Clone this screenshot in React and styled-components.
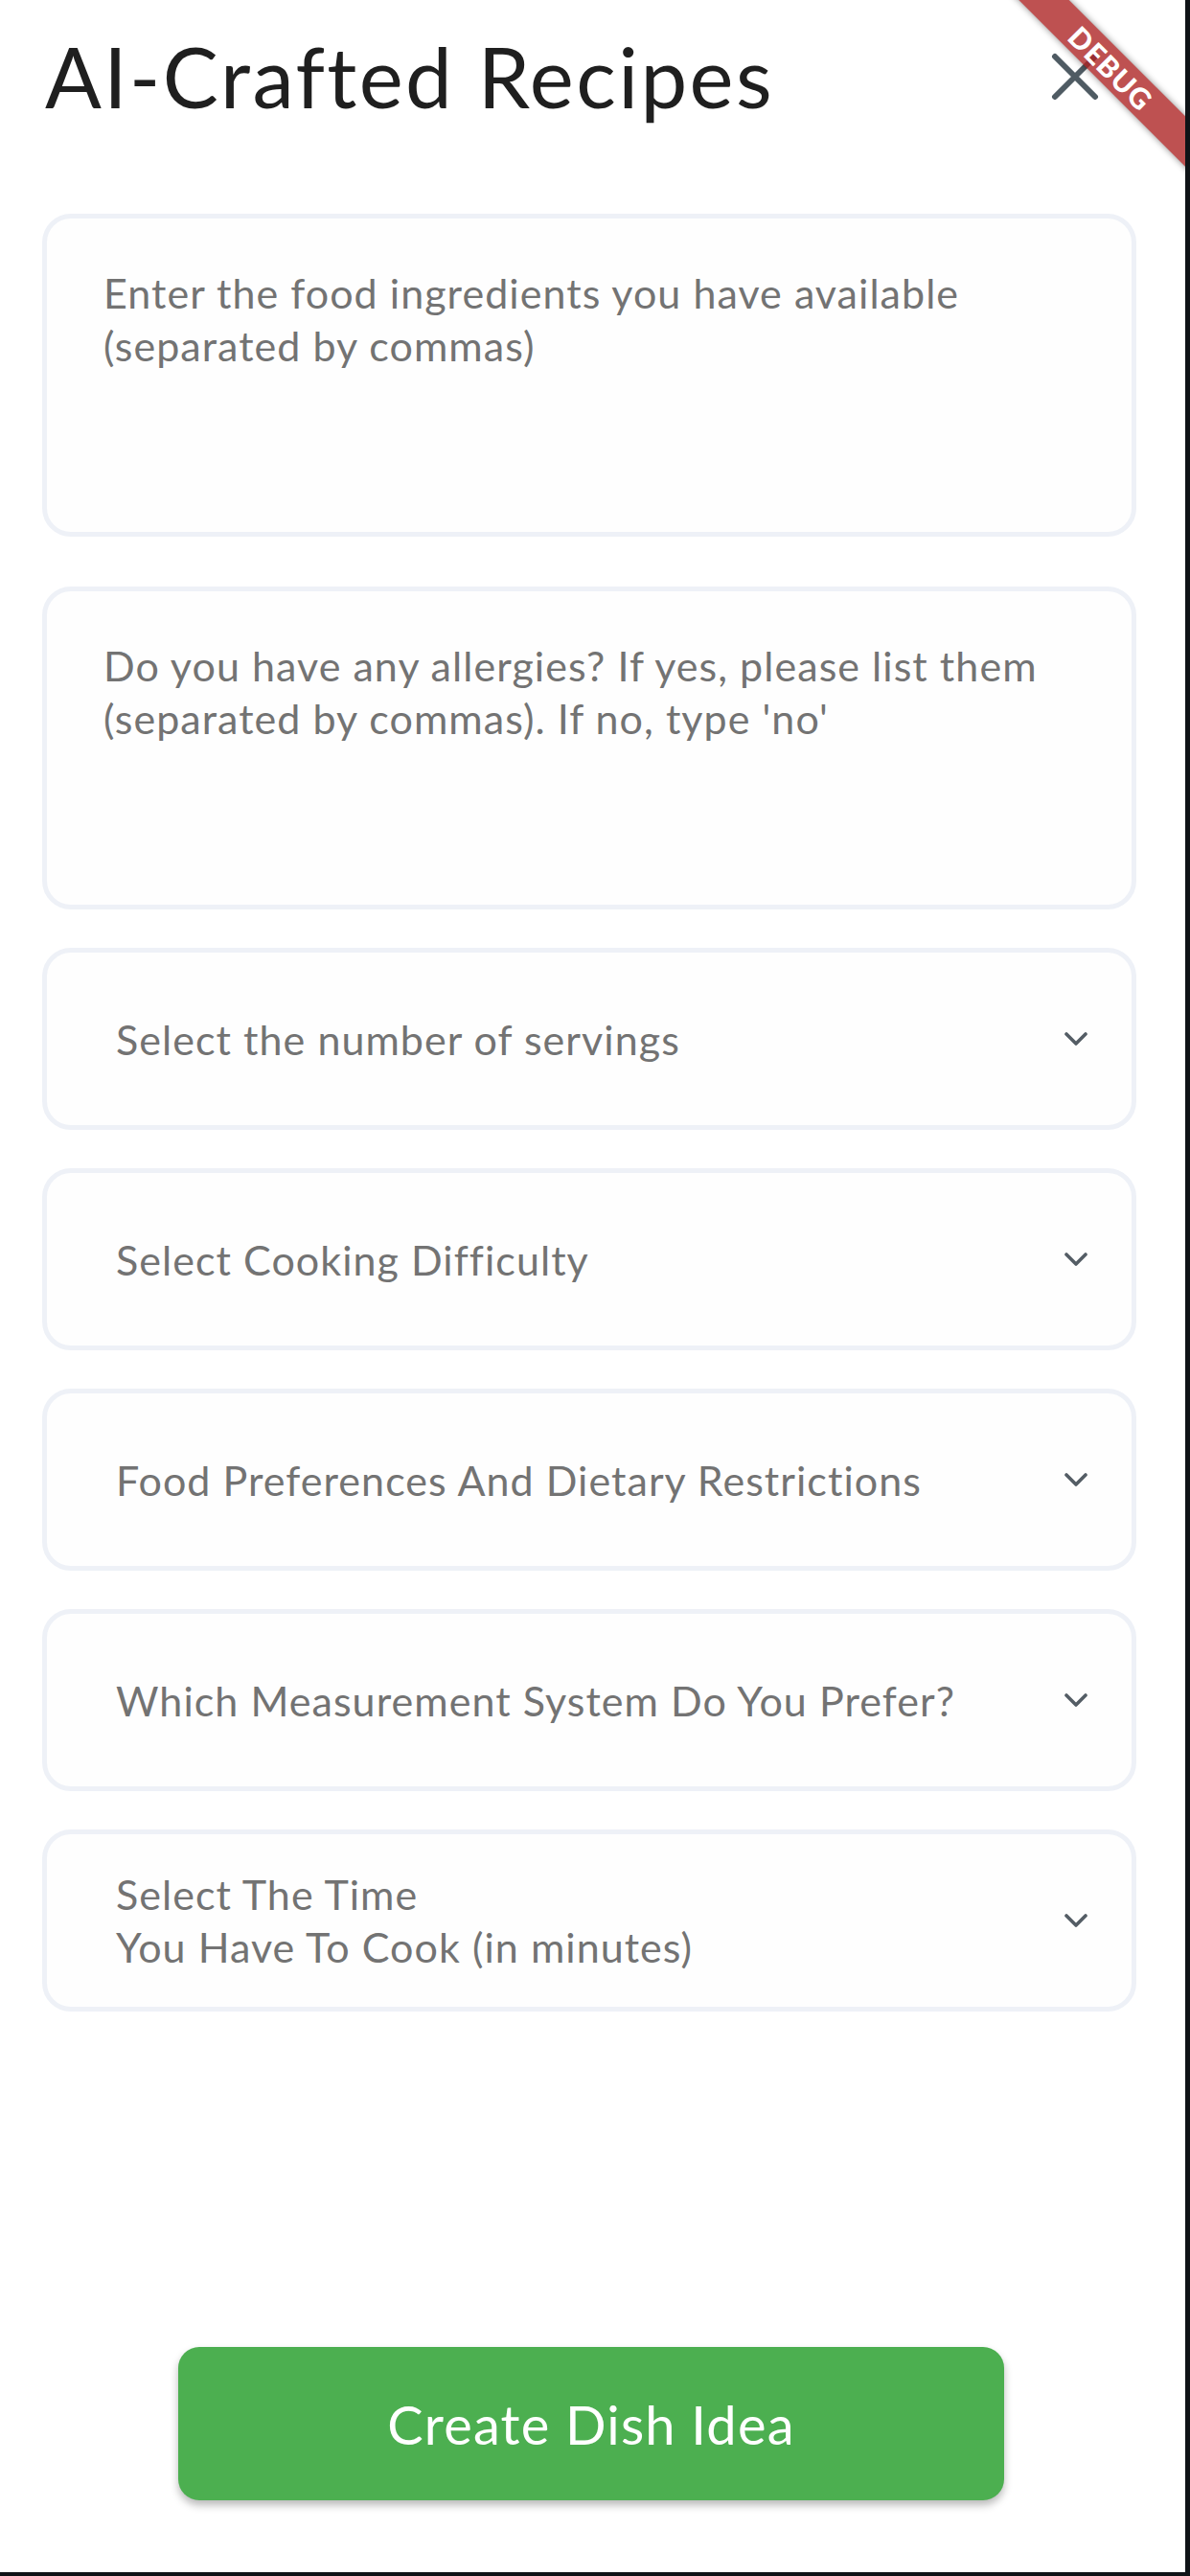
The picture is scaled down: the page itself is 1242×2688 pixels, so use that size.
import React from "react";
import styled, { createGlobalStyle } from "styled-components";

const FONT = `"Lato", "Noto Sans", sans-serif`;

const GlobalStyle = createGlobalStyle`
  html, body {
    margin: 0;
    padding: 0;
    background: #0f1317;
  }
  * {
    box-sizing: border-box;
  }
`;

const Frame = styled.div`
  width: 1242px;
  height: 2688px;
  background: #0f1317;
  overflow: hidden;
`;

const Screen = styled.div`
  position: relative;
  width: 1237px;
  height: 2684px;
  background: #ffffff;
  overflow: hidden;
  display: flex;
  flex-direction: column;
  padding: 0 51px 0 44px;
  font-family: ${FONT};
`;

const Header = styled.header`
  display: flex;
  align-items: center;
  justify-content: space-between;
  margin-top: 28px;
  height: 104px;
`;

const Title = styled.h1`
  margin: 0 0 0 3px;
  font-size: 87px;
  line-height: 104px;
  font-weight: 400;
  color: #1f1f1f;
  letter-spacing: 2.4px;
`;

const CloseButton = styled.button`
  display: flex;
  align-items: center;
  justify-content: center;
  width: 50px;
  height: 50px;
  margin-right: 39px;
  padding: 0;
  border: none;
  background: transparent;
`;

const Form = styled.div`
  display: flex;
  flex-direction: column;
  gap: 40px;
  margin-top: 91px;
`;

const Card = styled.div`
  width: 100%;
  border: 5px solid #eef1f7;
  border-radius: 30px;
  background: #fefefe;
`;

const TextCard = styled(Card)`
  height: 337px;
  padding: 50px 30px 0 59px;
  margin-bottom: ${({ $spaceAfter }) => $spaceAfter || 0}px;
`;

const SelectCard = styled(Card)`
  height: 190px;
  display: flex;
  align-items: center;
  justify-content: space-between;
  padding: 0 46px 0 72px;
`;

const Hint = styled.div`
  font-size: 43px;
  line-height: 55px;
  color: #737373;
  letter-spacing: 1.05px;
  white-space: nowrap;
`;

const ChevronIcon = () => (
  <svg width="24" height="16" viewBox="0 0 24 16">
    <polyline
      points="2,3 12,13 22,3"
      fill="none"
      stroke="#545d65"
      strokeWidth="3.6"
      strokeLinecap="round"
      strokeLinejoin="round"
    />
  </svg>
);

const CloseIcon = () => (
  <svg width="50" height="50" viewBox="0 0 50 50">
    <path
      d="M4 4 L46 46 M46 4 L4 46"
      stroke="#4f5b63"
      strokeWidth="6"
      strokeLinecap="round"
    />
  </svg>
);

const Footer = styled.div`
  flex: 1;
  display: flex;
  align-items: flex-end;
  justify-content: center;
  padding-bottom: 75px;
  padding-left: 4px;
`;

const PrimaryButton = styled.button`
  width: 862px;
  height: 160px;
  border: none;
  border-radius: 22px;
  background: #4caf50;
  color: #ffffff;
  font-family: ${FONT};
  font-size: 56px;
  font-weight: 400;
  letter-spacing: 1.2px;
  box-shadow: 0 5px 8px rgba(0, 0, 0, 0.28);
`;

const DebugBanner = styled.div`
  position: absolute;
  left: 960px;
  top: 52px;
  width: 400px;
  height: 37px;
  transform: rotate(45deg);
  background: rgba(172, 32, 32, 0.78);
  box-shadow: 0 0 7px rgba(0, 0, 0, 0.45);
  display: flex;
  align-items: center;
  justify-content: center;
  color: #ffffff;
  font-family: ${FONT};
  font-weight: 900;
  font-size: 30px;
  letter-spacing: 1px;
  pointer-events: none;
`;

const selects = [
  ["Select the number of servings"],
  ["Select Cooking Difficulty"],
  ["Food Preferences And Dietary Restrictions"],
  ["Which Measurement System Do You Prefer?"],
  ["Select The Time", "You Have To Cook (in minutes)"],
];

export default function App() {
  return (
    <>
      <GlobalStyle />
      <Frame>
        <Screen>
          <Header>
            <Title>AI-Crafted Recipes</Title>
            <CloseButton aria-label="close">
              <CloseIcon />
            </CloseButton>
          </Header>
          <Form>
            <TextCard $spaceAfter={12}>
              <Hint>
                Enter the food ingredients you have available
                <br />
                (separated by commas)
              </Hint>
            </TextCard>
            <TextCard>
              <Hint>
                Do you have any allergies? If yes, please list them
                <br />
                (separated by commas). If no, type 'no'
              </Hint>
            </TextCard>
            {selects.map((lines) => (
              <SelectCard key={lines[0]}>
                <Hint>
                  {lines.map((line, i) => (
                    <React.Fragment key={line}>
                      {i > 0 && <br />}
                      {line}
                    </React.Fragment>
                  ))}
                </Hint>
                <ChevronIcon />
              </SelectCard>
            ))}
          </Form>
          <Footer>
            <PrimaryButton>Create Dish Idea</PrimaryButton>
          </Footer>
          <DebugBanner>DEBUG</DebugBanner>
        </Screen>
      </Frame>
    </>
  );
}
